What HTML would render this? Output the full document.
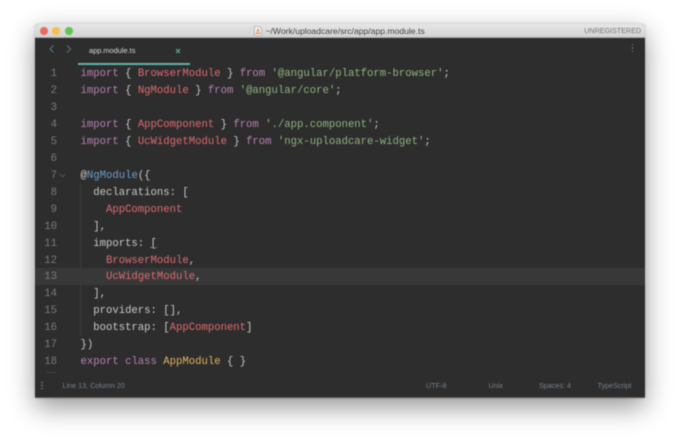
<!DOCTYPE html>
<html><head><meta charset="utf-8">
<style>
html,body{margin:0;padding:0;width:680px;height:444px;overflow:hidden;background:#fff}
body{position:relative;font-family:"Liberation Sans",sans-serif}
#win{position:absolute;left:35px;top:24px;width:610px;height:373.5px;border-radius:4px 4px 1px 1px;box-shadow:0 9px 26px rgba(0,0,0,.42),0 0 3px rgba(0,0,0,.18);overflow:hidden;background:#2d2d2d;filter:blur(.45px)}
#bar{position:absolute;left:0;top:0;width:610px;height:13px;background:linear-gradient(#e6e6e6,#d2d2d2);border-bottom:.5px solid #a8a8a8}
.dot{position:absolute;top:3px;width:7.8px;height:7.8px;border-radius:50%}
#title{position:absolute;left:230.5px;top:3px;font-size:8.6px;line-height:9px;color:#444;white-space:nowrap}
#unreg{position:absolute;right:4px;top:3px;font-size:7.15px;line-height:9px;color:#777;white-space:nowrap}
#tabline{position:absolute;left:43px;top:38.7px;width:112px;height:2px;background:#5fb3a7}
#tabname{position:absolute;left:54px;top:22px;font-size:7.4px;line-height:9px;color:#d8d8d8;white-space:nowrap}
.mono{font-family:"Liberation Mono",monospace;font-size:10.62px;line-height:17px;white-space:pre;position:absolute}
.ln{left:0;width:22px;text-align:right;color:#7a7a7a}
.c{left:45.5px;color:#c8c8c8}
.k{color:#b681b0}.r{color:#de6a70}.s{color:#8fb37e}.y{color:#e0b45f}.b{color:#6a9fc9}
#hl{position:absolute;left:0;top:243.5px;width:610px;height:17px;background:#383838}
.g{position:absolute;width:1px;background:#3a3a3a}
.st{font-size:7.2px;line-height:9px;color:#74818b;position:absolute;top:357px;white-space:nowrap}
.v{position:absolute;width:1.8px;height:1.8px;background:#5f8794}
</style></head><body>
<div id="win">
<div id="bar">
<div class="dot" style="left:5px;background:#ee6a5e"></div>
<div class="dot" style="left:17.3px;background:#f5bf4f"></div>
<div class="dot" style="left:29.8px;background:#61c554"></div>
<svg style="position:absolute;left:219px;top:2px" width="8" height="10" viewBox="0 0 8 10"><path d="M.5.5H5.5L7.5 2.5V9.5H.5Z" fill="#f4f4f4" stroke="#999" stroke-width=".6"/><path d="M4 3L2.2 7.5H5.8Z" fill="none" stroke="#d9854a" stroke-width=".9"/></svg>
<div id="title">~/Work/uploadcare/src/app/app.module.ts</div>
<div id="unreg">UNREGISTERED</div>
</div>
<svg style="position:absolute;left:13px;top:20px" width="24" height="11" viewBox="0 0 24 11" fill="none" stroke="#55798a" stroke-width="1"><path d="M5.5 1.5L2 5L5.5 8.5"/><path d="M19 1.5L22.5 5L19 8.5"/></svg>
<div id="tabname">app.module.ts</div>
<svg style="position:absolute;left:139.5px;top:24px" width="6" height="6" viewBox="0 0 6 6" stroke="#5fb3a7" stroke-width="1"><path d="M1 1L5 5M5 1L1 5"/></svg>
<div id="tabline"></div>
<i class="v" style="left:596.5px;top:19.5px"></i><i class="v" style="left:596.5px;top:23px"></i><i class="v" style="left:596.5px;top:26.5px"></i>
<div id="hl"></div>
<div class="g" style="left:45px;top:159px;height:154px"></div>

<div class="mono ln" style="top:42px">1</div>
<div class="mono ln" style="top:59px">2</div>
<div class="mono ln" style="top:76px">3</div>
<div class="mono ln" style="top:93px">4</div>
<div class="mono ln" style="top:110px">5</div>
<div class="mono ln" style="top:127px">6</div>
<div class="mono ln" style="top:144px">7</div>
<div class="mono ln" style="top:161px">8</div>
<div class="mono ln" style="top:178px">9</div>
<div class="mono ln" style="top:195px">10</div>
<div class="mono ln" style="top:212px">11</div>
<div class="mono ln" style="top:229px">12</div>
<div class="mono ln" style="top:245px">13</div>
<div class="mono ln" style="top:262px">14</div>
<div class="mono ln" style="top:279px">15</div>
<div class="mono ln" style="top:296px">16</div>
<div class="mono ln" style="top:313px">17</div>
<div class="mono ln" style="top:330px">18</div>
<div style="position:absolute;left:12px;top:348px;width:9px;height:1px;background:#444"></div>
<svg style="position:absolute;left:23.5px;top:149px" width="7" height="5" viewBox="0 0 7 5" fill="none" stroke="#4f5d63" stroke-width=".9"><path d="M.8 1L3.5 3.8L6.2 1"/></svg>

<div class="mono c" style="top:42px"><span class="k">import</span> { <span class="r">BrowserModule</span> } <span class="k">from</span> <span class="s">'@angular/platform-browser'</span>;</div>
<div class="mono c" style="top:59px"><span class="k">import</span> { <span class="r">NgModule</span> } <span class="k">from</span> <span class="s">'@angular/core'</span>;</div>
<div class="mono c" style="top:93px"><span class="k">import</span> { <span class="r">AppComponent</span> } <span class="k">from</span> <span class="s">'./app.component'</span>;</div>
<div class="mono c" style="top:110px"><span class="k">import</span> { <span class="r">UcWidgetModule</span> } <span class="k">from</span> <span class="s">'ngx-uploadcare-widget'</span>;</div>
<div class="mono c" style="top:144px">@<span class="b">NgModule</span>({</div>
<div class="mono c" style="top:161px">  declarations: [</div>
<div class="mono c" style="top:178px">    <span class="r">AppComponent</span></div>
<div class="mono c" style="top:195px">  ],</div>
<div class="mono c" style="top:212px">  imports: <span style="text-decoration:underline">[</span></div>
<div class="mono c" style="top:229px">    <span class="r">BrowserModule</span>,</div>
<div class="mono c" style="top:245px">    <span class="r">UcWidgetModule</span>,</div>
<div class="mono c" style="top:262px">  ],</div>
<div class="mono c" style="top:279px">  providers: [],</div>
<div class="mono c" style="top:296px">  bootstrap: [<span class="r">AppComponent</span>]</div>
<div class="mono c" style="top:313px">})</div>
<div class="mono c" style="top:330px"><span class="k">export</span> <span class="k">class</span> <span class="y">AppModule</span> { }</div>

<i class="v" style="left:6px;top:357.5px"></i><i class="v" style="left:6px;top:360.5px"></i><i class="v" style="left:6px;top:363.5px"></i>
<div class="st" style="left:27.5px">Line 13, Column 20</div>
<div class="st" style="left:391px">UTF-8</div>
<div class="st" style="left:453.5px">Unix</div>
<div class="st" style="left:504px">Spaces: 4</div>
<div class="st" style="left:562.5px">TypeScript</div>
<div style="position:absolute;left:0;bottom:0;width:610px;height:1px;background:#555"></div>
</div>
</body></html>
